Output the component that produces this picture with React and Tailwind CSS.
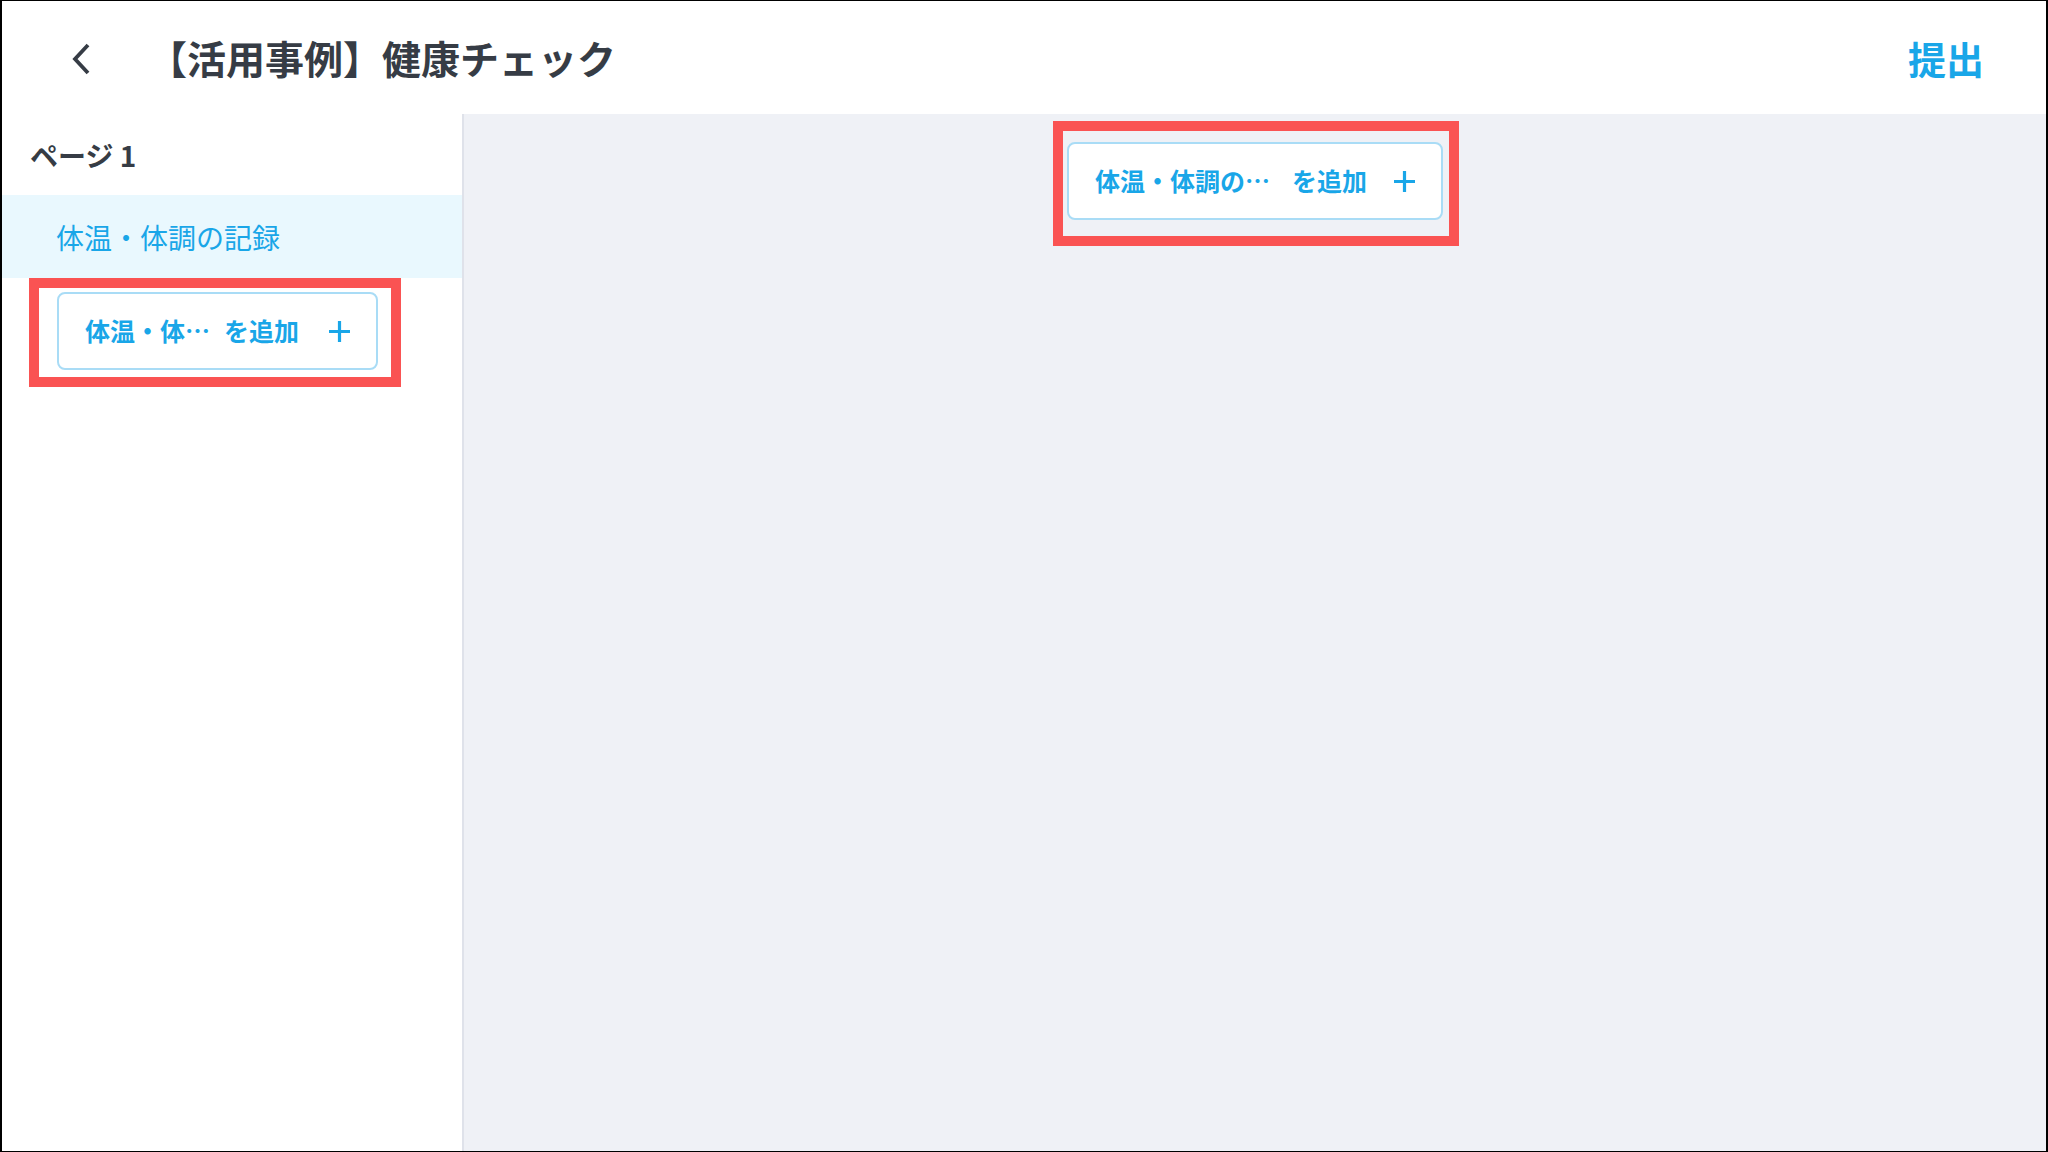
import React from "react";

const JP = { fontFamily: '"Noto Sans CJK JP", "Noto Sans", sans-serif' };

function Plus() {
  return (
    <svg width="21" height="21" viewBox="0 0 21 21" className="shrink-0">
      <path d="M10.5 0 V21 M0 10.5 H21" stroke="#19a6e8" strokeWidth="3.2" fill="none" />
    </svg>
  );
}

function AddButton({ label, width, gapText, overlay }) {
  return (
    <div className="relative" style={{ width }}>
      <div
        className="absolute border-[10px] border-[#fa5353] pointer-events-none"
        style={overlay}
      />
      <div className="relative h-[78px] bg-white border-2 border-[#a9dcf6] rounded-[8px] flex items-center pl-[26px] pr-[26px] text-[25px] font-bold text-[#19a6e8]">
        <span className="whitespace-nowrap">{label}</span>
        <span className="whitespace-nowrap" style={{ marginLeft: gapText }}>を追加</span>
        <span className="flex-1" />
        <Plus />
      </div>
    </div>
  );
}

export default function App() {
  return (
    <div
      className="w-[2048px] h-[1152px] flex flex-col bg-white border-black border-l-2 border-r-2 border-t border-b overflow-hidden"
      style={JP}
    >
      <header className="h-[113px] shrink-0 flex items-center bg-white">
        <svg width="22" height="34" viewBox="0 0 22 34" className="ml-[68px] mt-[2px]">
          <path d="M18 3 L5 17 L18 31" stroke="#363c45" strokeWidth="3.8" fill="none" strokeLinejoin="miter" />
        </svg>
        <h1 className="ml-[56px] text-[39px] font-bold text-[#363c45] leading-none">
          【活用事例】健康チェック
        </h1>
        <div className="flex-1" />
        <div className="mr-[62px] text-[38px] font-bold text-[#19a6e8] leading-none">提出</div>
      </header>
      <div className="flex-1 flex min-h-0">
        <aside className="w-[462px] shrink-0 border-r-2 border-[#dfe2ea] bg-white">
          <div className="h-[81px] flex items-center pl-[28px] text-[28px] font-bold text-[#363c45]">
            ページ 1
          </div>
          <div className="h-[83px] bg-[#e9f8fe] flex items-center pl-[54px] text-[28px] text-[#19a6e8]">
            体温・体調の記録
          </div>
          <div className="ml-[55px] mt-[14px]">
            <AddButton
              label="体温・体…"
              width={321}
              gapText={14}
              overlay={{ left: -28, right: -23, top: -14, bottom: -17 }}
            />
          </div>
        </aside>
        <main className="flex-1 bg-[#eff1f6] flex justify-center pt-[28px]">
          <div>
            <AddButton
              label="体温・体調の…"
              width={376}
              gapText={22}
              overlay={{ left: -14, right: -16, top: -21, bottom: -26 }}
            />
          </div>
        </main>
      </div>
    </div>
  );
}
